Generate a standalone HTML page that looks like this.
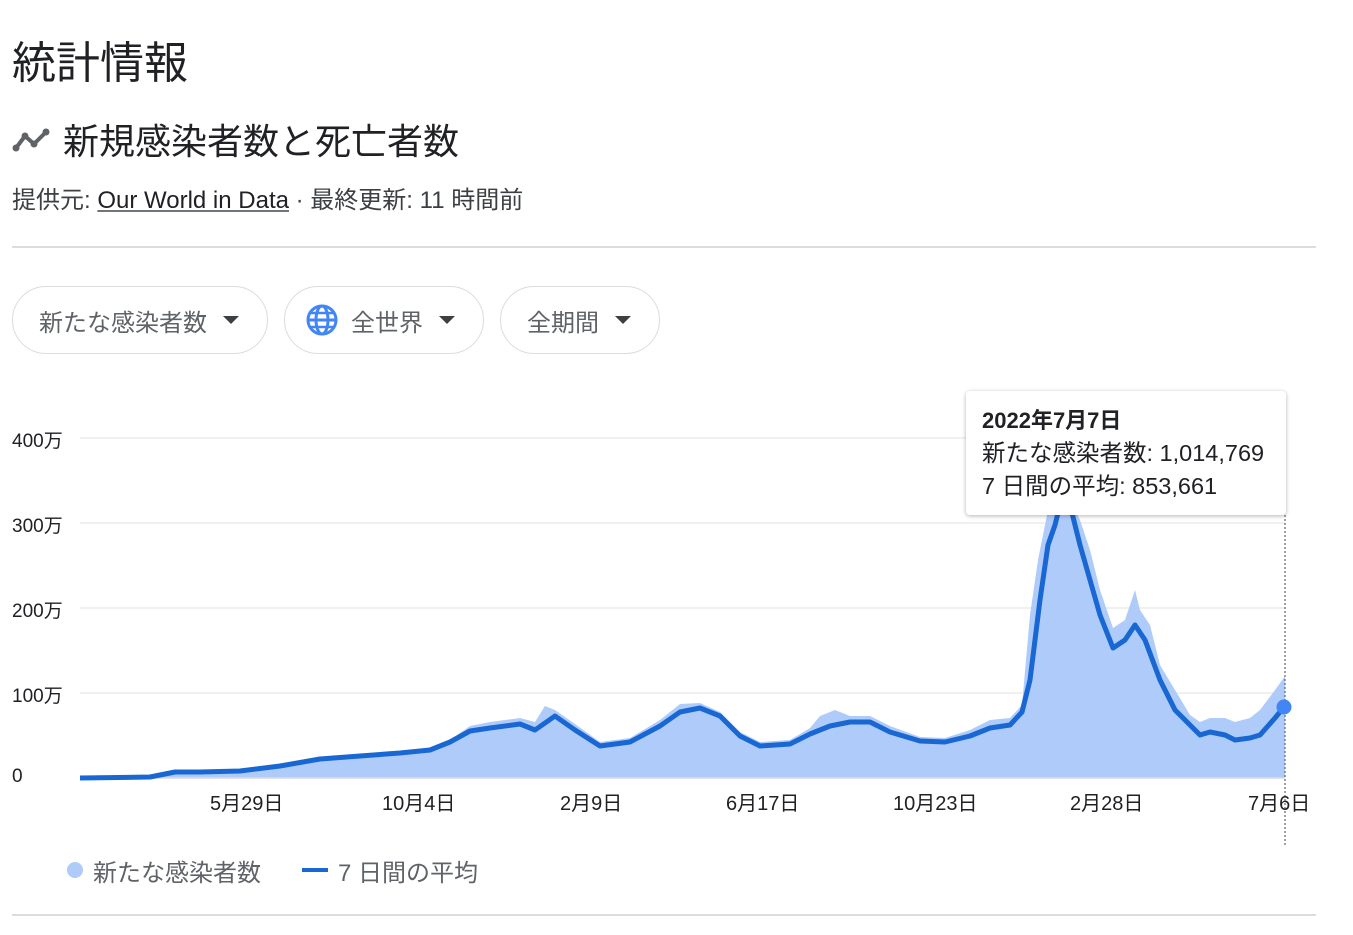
<!DOCTYPE html>
<html><head><meta charset="utf-8"><style>
body{margin:0;background:#fff;font-family:"Liberation Sans","Noto Sans CJK JP",sans-serif;color:#202124;width:1353px;height:935px;overflow:hidden;position:relative}
.a{position:absolute;white-space:nowrap}
.chip{position:absolute;top:286px;height:68px;border:1px solid #dadce0;border-radius:35px;box-sizing:border-box;font-size:24px;color:#5f6368;display:flex;align-items:center}
.tri{width:0;height:0;border-left:8px solid transparent;border-right:8px solid transparent;border-top:8px solid #3c4043;margin-left:16px}
.yl{position:absolute;left:12px;font-size:19px;color:#202124}
.xl{position:absolute;top:787px;font-size:20px;color:#202124}
</style></head><body>
<div class="a" style="left:12px;top:27px;font-size:44px">統計情報</div>
<svg class="a" style="left:12px;top:128px" width="40" height="24" viewBox="0 0 40 24"><polyline points="4,20 13,8 22,16 34,4" fill="none" stroke="#5f6368" stroke-width="4" stroke-linejoin="round"/><circle cx="4" cy="20" r="3.5" fill="#5f6368"/><circle cx="13" cy="8" r="3.5" fill="#5f6368"/><circle cx="22" cy="16" r="3.5" fill="#5f6368"/><circle cx="34" cy="4" r="3.5" fill="#5f6368"/></svg>
<div class="a" style="left:63px;top:113px;font-size:36px">新規感染者数と死亡者数</div>
<div class="a" style="left:12px;top:180px;font-size:24px;color:#3c4043">提供元: <span style="color:#202124;text-decoration:underline;text-decoration-color:#70757a">Our World in Data</span> · 最終更新: 11 時間前</div>
<div class="a" style="left:12px;top:246px;width:1304px;height:2px;background:#dadce0"></div>
<div class="chip" style="left:12px;width:256px;padding-left:26px">新たな感染者数<span class="tri"></span></div>
<div class="chip" style="left:284px;width:200px;padding-left:20px"><svg width="34" height="34" viewBox="0 0 34 34" style="margin-right:12px"><circle cx="17" cy="17" r="14" fill="none" stroke="#4285f4" stroke-width="3"/><ellipse cx="17" cy="17" rx="6" ry="14" fill="none" stroke="#4285f4" stroke-width="3"/><line x1="3" y1="17" x2="31" y2="17" stroke="#4285f4" stroke-width="3"/><line x1="6" y1="10" x2="28" y2="10" stroke="#4285f4" stroke-width="2.5"/><line x1="6" y1="24" x2="28" y2="24" stroke="#4285f4" stroke-width="2.5"/></svg>全世界<span class="tri"></span></div>
<div class="chip" style="left:500px;width:160px;padding-left:26px">全期間<span class="tri"></span></div>
<svg class="a" style="left:0;top:0" width="1353" height="935">
<g stroke="#ececec" stroke-width="1.5"><line x1="80" y1="438" x2="1285" y2="438"/><line x1="80" y1="523" x2="1285" y2="523"/><line x1="80" y1="608" x2="1285" y2="608"/><line x1="80" y1="693" x2="1285" y2="693"/></g>
<polygon fill="#aecbfa" points="80,778 150,777 175,771 200,771 240,770 280,765 320,757 360,754 400,751 430,748 450,740 470,726 490,722 520,718 535,722 545,706 555,710 575,724 600,742 630,738 660,720 680,704 700,703 720,712 740,732 760,742 790,740 810,728 820,716 835,710 850,716 870,716 890,726 920,737 945,738 970,730 990,720 1010,718 1022,705 1030,615 1038,560 1048,510 1055,500 1070,500 1080,520 1090,550 1100,590 1113,628 1125,620 1135,590 1140,610 1150,625 1160,665 1175,690 1190,715 1200,722 1210,718 1225,718 1235,722 1250,718 1260,710 1275,690 1285,676 1285,778"/>
<line x1="80" y1="778" x2="1285" y2="778" stroke="#dadce0" stroke-width="1.5"/>
<polyline fill="none" stroke="#1967d2" stroke-width="5" stroke-linejoin="round" points="80,778 150,777 175,772 200,772 240,771 280,766 320,759 360,756 400,753 430,750 450,742 470,731 490,728 520,724 535,730 555,716 575,730 600,746 630,742 660,726 680,712 700,708 720,716 740,736 760,746 790,744 810,734 830,726 850,722 870,722 890,732 920,741 945,742 970,736 990,728 1010,725 1022,712 1030,680 1040,600 1048,545 1055,525 1060,505 1070,505 1080,545 1090,580 1100,615 1113,648 1125,640 1135,625 1145,640 1160,680 1175,710 1190,725 1200,735 1210,732 1225,735 1235,740 1250,738 1260,735 1275,718 1284,707"/>
<line x1="1285" y1="515" x2="1285" y2="845" stroke="#5f6368" stroke-width="1.2" stroke-dasharray="2,2"/>
<circle cx="1284" cy="707" r="7.5" fill="#4285f4"/>
</svg>
<div class="yl" style="top:426px">400万</div>
<div class="yl" style="top:511px">300万</div>
<div class="yl" style="top:596px">200万</div>
<div class="yl" style="top:681px">100万</div>
<div class="yl" style="top:766px">0</div>
<div class="xl" style="left:210px">5月29日</div>
<div class="xl" style="left:382px">10月4日</div>
<div class="xl" style="left:560px">2月9日</div>
<div class="xl" style="left:726px">6月17日</div>
<div class="xl" style="left:893px">10月23日</div>
<div class="xl" style="left:1070px">2月28日</div>
<div class="xl" style="left:1248px">7月6日</div>
<div class="a" style="left:966px;top:391px;width:320px;height:124px;background:#fff;border-radius:4px;box-shadow:0 1px 4px rgba(0,0,0,.3);box-sizing:border-box;padding:13px 16px;font-size:23.5px;line-height:33px">
<div style="font-weight:bold;font-size:22px">2022年7月7日</div><div>新たな感染者数: 1,014,769</div><div>7 日間の平均: 853,661</div></div>
<div class="a" style="left:67px;top:862px;width:16px;height:16px;border-radius:50%;background:#aecbfa"></div>
<div class="a" style="left:93px;top:853px;font-size:24px;color:#5f6368">新たな感染者数</div>
<div class="a" style="left:302px;top:868px;width:26px;height:4px;background:#1967d2"></div>
<div class="a" style="left:338px;top:853px;font-size:24px;color:#5f6368">7 日間の平均</div>
<div class="a" style="left:12px;top:914px;width:1304px;height:2px;background:#dadce0"></div>
</body></html>
